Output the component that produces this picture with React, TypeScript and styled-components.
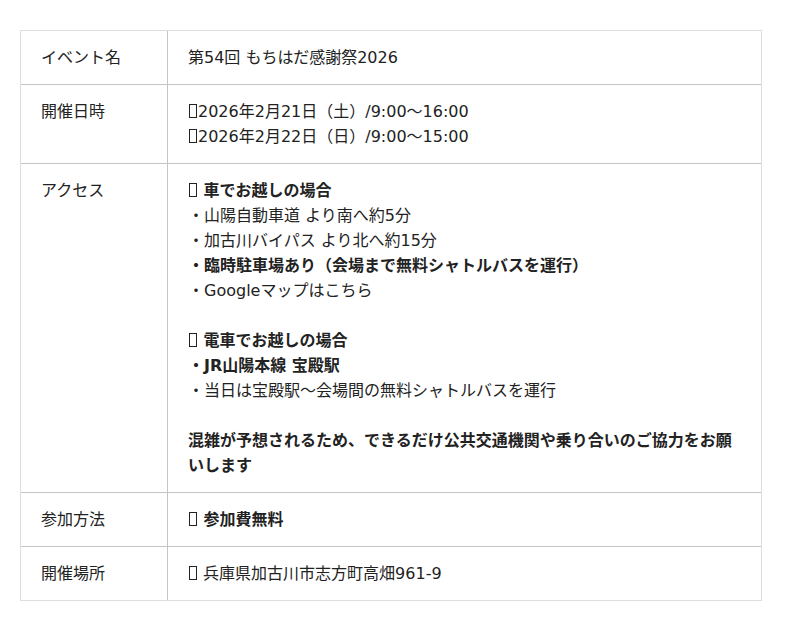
import React from "react";
import styled, { createGlobalStyle } from "styled-components";

const Global = createGlobalStyle`
  html, body { margin: 0; padding: 0; background: #fff; }
  body {
    font-family: "DejaVu Sans", "Noto Sans CJK JP", sans-serif;
    color: #222;
  }
`;

const Page = styled.div`
  padding: 30px 20px;
`;

const Table = styled.table`
  width: 742px;
  border-collapse: separate;
  border-spacing: 0;
  border: 1px solid #dedede;
  font-size: 16px;
  line-height: 25px;
`;

const Row = styled.tr<{ $first?: boolean }>`
  & > th, & > td {
    border-top: ${(p) => (p.$first ? "none" : "1px solid #c4c4c4")};
  }
`;

const Label = styled.th`
  width: 106px;
  padding: 14px 20px;
  text-align: left;
  vertical-align: top;
  font-weight: normal;
  border-right: 1px solid #c4c4c4;
  color: #222;
`;

const Cell = styled.td`
  padding: 14px 20px;
  vertical-align: top;
`;

const Block = styled.div<{ $gap?: boolean }>`
  margin-bottom: ${(p) => (p.$gap ? "25px" : "0")};
`;

const Line = styled.div<{ $bold?: boolean }>`
  font-weight: ${(p) => (p.$bold ? "bold" : "normal")};
`;

/* missing-glyph box, as the emoji is drawn in the reference */
const Tofu = styled.span`
  display: inline-block;
  box-sizing: border-box;
  width: 8px;
  height: 14px;
  margin: 0 1px;
  border: 1px solid #222;
  vertical-align: -1px;
`;

const Icon = ({ name }: { name: string }) => <Tofu role="img" aria-label={name} />;

const rows: { label: string; content: React.ReactNode }[] = [
  { label: "イベント名", content: <Line>第54回 もちはだ感謝祭2026</Line> },
  {
    label: "開催日時",
    content: (
      <>
        <Line><Icon name="📅" />2026年2月21日（土）/9:00～16:00</Line>
        <Line><Icon name="📅" />2026年2月22日（日）/9:00～15:00</Line>
      </>
    ),
  },
  {
    label: "アクセス",
    content: (
      <>
        <Block $gap>
          <Line $bold><Icon name="🚗" /> 車でお越しの場合</Line>
          <Line>・山陽自動車道 より南へ約5分</Line>
          <Line>・加古川バイパス より北へ約15分</Line>
          <Line $bold>・臨時駐車場あり（会場まで無料シャトルバスを運行）</Line>
          <Line>・Googleマップはこちら</Line>
        </Block>
        <Block $gap>
          <Line $bold><Icon name="🚃" /> 電車でお越しの場合</Line>
          <Line $bold>・JR山陽本線 宝殿駅</Line>
          <Line>・当日は宝殿駅～会場間の無料シャトルバスを運行</Line>
        </Block>
        <Block>
          <Line $bold>
            混雑が予想されるため、できるだけ公共交通機関や乗り合いのご協力をお願いします
          </Line>
        </Block>
      </>
    ),
  },
  { label: "参加方法", content: <Line $bold><Icon name="🎫" /> 参加費無料</Line> },
  { label: "開催場所", content: <Line><Icon name="📍" /> 兵庫県加古川市志方町高畑961-9</Line> },
];

export default function App() {
  return (
    <Page>
      <Global />
      <Table>
        <tbody>
          {rows.map((r, i) => (
            <Row key={r.label} $first={i === 0}>
              <Label>{r.label}</Label>
              <Cell>{r.content}</Cell>
            </Row>
          ))}
        </tbody>
      </Table>
    </Page>
  );
}
